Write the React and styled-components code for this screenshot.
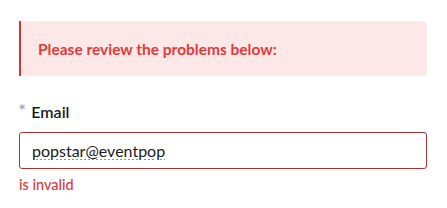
import React from 'react'
import styled, { createGlobalStyle } from 'styled-components'

const Global = createGlobalStyle`
  body {
    margin: 0;
    background: #fff;
    font-family: Lato, "Noto Sans", sans-serif;
  }
`;

const Page = styled.div`
  padding: 21px 20px 0 19px;
  display: flex;
  flex-direction: column;
`;

const Alert = styled.div`
  height: 55px;
  box-sizing: border-box;
  display: flex;
  align-items: center;
  padding-left: 17px;
  background: #fde8e8;
  border-left: 2px solid #c43c36;
  border-radius: 0 4px 4px 0;
  color: #e03b3b;
  font-size: 15.5px;
  font-weight: 700;
`;

const Field = styled.div`
  margin-top: 25px;
  display: flex;
  flex-direction: column;
`;

const Label = styled.label`
  display: flex;
  align-items: flex-start;
  gap: 6px;
  font-size: 16px;
  font-weight: 600;
  color: #1a1a1a;
  line-height: 22px;
`;

const Required = styled.span`
  color: #a8a8a8;
  font-family: "DejaVu Sans", sans-serif;
  font-size: 12px;
  font-weight: 700;
  line-height: 14px;
  margin-top: 1px;
`;

const Input = styled.input`
  margin-top: 9px;
  height: 37px;
  box-sizing: border-box;
  border: 1px solid #a93434;
  border-radius: 3px;
  padding: 0 12px;
  font-family: inherit;
  font-size: 16px;
  color: #1a1a1a;
  outline: none;
  text-decoration: underline dotted #e04848;
  text-underline-offset: 3px;
`;

const Error = styled.div`
  margin-top: 7px;
  color: #d93a3a;
  font-size: 14.5px;
  font-weight: 500;
`;

export default function App() {
  return (
    <Page>
      <Global />
      <Alert>Please review the problems below:</Alert>
      <Field>
        <Label>
          <Required>*</Required>
          Email
        </Label>
        <Input defaultValue="popstar@eventpop" />
        <Error>is invalid</Error>
      </Field>
    </Page>
  )
}
